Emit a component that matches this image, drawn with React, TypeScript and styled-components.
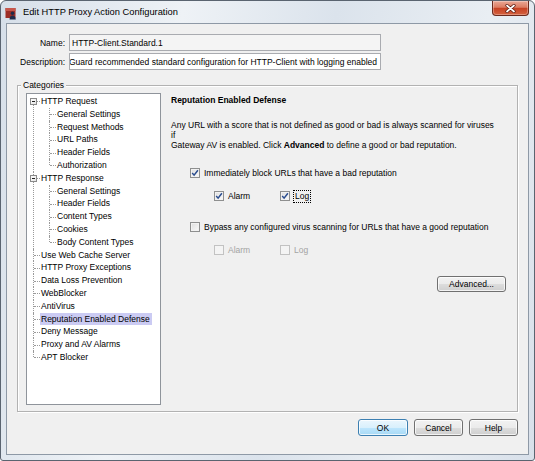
import React from 'react';
import styled, { createGlobalStyle, css } from 'styled-components';

const GlobalStyle = createGlobalStyle`
  html, body {
    margin: 0;
    padding: 0;
    background: #ffffff;
  }
  body {
    font-family: "Liberation Sans", Arial, sans-serif;
    color: #000;
  }
  ul {
    list-style: none;
    margin: 0;
    padding: 0;
  }
`;

const Window = styled.div`
  box-sizing: border-box;
  width: 535px;
  height: 461px;
  display: flex;
  flex-direction: column;
  border: 1px solid #5a6470;
  border-radius: 6px 6px 3px 3px;
  background: linear-gradient(100deg, #d6dfe9 0%, #eef2f6 30%, #dbe3ec 55%, #e9eef3 80%, #d8e0ea 100%);
  overflow: hidden;
`;

const TitleBar = styled.div`
  height: 22px;
  flex-shrink: 0;
  display: flex;
  align-items: flex-start;
  padding: 0 5px 0 4px;
`;

const AppIcon = styled.svg`
  margin-top: 6px;
  flex-shrink: 0;
`;

const TitleText = styled.span`
  margin: 4px 0 0 5px;
  font-size: 9.3px;
  line-height: 14px;
  color: #000;
`;

const CloseButton = styled.div`
  margin-left: auto;
  width: 37px;
  height: 15px;
  box-sizing: border-box;
  border: 1px solid #6b2a1d;
  border-top: none;
  border-radius: 0 0 4px 4px;
  background: linear-gradient(#eaa896 0%, #dc7c62 45%, #c74224 52%, #d4623f 100%);
  box-shadow: inset 0 0 0 1px rgba(255, 255, 255, 0.3);
  display: flex;
  align-items: center;
  justify-content: center;
`;

const Client = styled.div`
  flex: 1;
  margin: 0 5px 5px;
  border: 1px solid #8e99a6;
  background: #f0f0f0;
  display: flex;
  flex-direction: column;
  padding: 10px 10px 18px 10px;
  min-height: 0;
`;

const FieldGrid = styled.div`
  display: grid;
  grid-template-columns: 52px 312px;
  column-gap: 4px;
  row-gap: 2px;
  align-items: center;
  margin-left: -4px;
`;

const FieldLabel = styled.span`
  justify-self: end;
  font-size: 8.5px;
  white-space: nowrap;
`;

const TextBox = styled.div<{ $readOnly?: boolean; $clipStart?: boolean }>`
  box-sizing: border-box;
  height: 17px;
  border: 1px solid #a9abb0;
  background: ${(p) => (p.$readOnly ? '#f4f4f4' : '#ffffff')};
  display: flex;
  align-items: center;
  justify-content: ${(p) => (p.$clipStart ? 'flex-end' : 'flex-start')};
  padding: 0 3px 0 2px;
  overflow: hidden;
  white-space: nowrap;
  font-size: 8.5px;
`;

const GroupBox = styled.div`
  position: relative;
  flex: 1;
  margin-top: 15px;
  border: 1px solid #b2b2b2;
  box-shadow: 1px 1px 0 #ffffff, inset 1px 1px 0 #ffffff;
  display: flex;
  padding: 7px 0 6px 8px;
  min-height: 0;
`;

const Legend = styled.span`
  position: absolute;
  top: -6px;
  left: 3px;
  padding: 0 2px;
  background: #f0f0f0;
  font-size: 8.5px;
  line-height: 11px;
`;

const ROW = 12.8;
const HALF = ROW / 2;

const Tree = styled.div`
  width: 135px;
  flex-shrink: 0;
  box-sizing: border-box;
  border: 1px solid #8f949b;
  background: #ffffff;
  padding-top: 1px;
  font-size: 8.5px;
  line-height: ${ROW}px;
`;

const dotted = '1px dotted #9a9a9a';

const TopItem = styled.li<{ $first?: boolean; $last?: boolean }>`
  position: relative;
  padding-left: 13px;

  &::before {
    content: '';
    position: absolute;
    left: 6px;
    top: ${(p) => (p.$first ? `${HALF}px` : '0')};
    ${(p) =>
      p.$last
        ? css`
            height: ${HALF}px;
          `
        : css`
            bottom: 0;
          `}
    border-left: ${dotted};
  }

  &::after {
    content: '';
    position: absolute;
    left: 7px;
    top: ${HALF}px;
    width: 6px;
    border-top: ${dotted};
  }
`;

const ChildItem = styled.li<{ $last?: boolean }>`
  position: relative;
  padding-left: 16px;

  &::before {
    content: '';
    position: absolute;
    left: 9px;
    top: 0;
    ${(p) =>
      p.$last
        ? css`
            height: ${HALF}px;
          `
        : css`
            bottom: 0;
          `}
    border-left: ${dotted};
  }

  &::after {
    content: '';
    position: absolute;
    left: 10px;
    top: ${HALF}px;
    width: 6px;
    border-top: ${dotted};
  }
`;

const Expander = styled.span`
  position: absolute;
  z-index: 1;
  left: 3px;
  top: 3px;
  width: 7px;
  height: 7px;
  box-sizing: border-box;
  border: 1px solid #8a8a8a;
  background: linear-gradient(135deg, #ffffff, #e4e4e4);

  &::after {
    content: '';
    position: absolute;
    left: 1px;
    right: 1px;
    top: 2px;
    height: 1px;
    background: #202020;
  }
`;

const NodeLabel = styled.span<{ $selected?: boolean }>`
  display: block;
  width: fit-content;
  height: ${ROW}px;
  line-height: ${ROW}px;
  padding: 0 2px 0 1px;
  white-space: nowrap;
  background: ${(p) => (p.$selected ? '#cbcbf3' : 'transparent')};
`;

const RightPanel = styled.div`
  flex: 1;
  display: flex;
  flex-direction: column;
  padding-left: 10px;
  font-size: 8.5px;
`;

const PanelTitle = styled.div`
  margin-top: 1px;
  font-weight: bold;
  line-height: 12px;
`;

const Paragraph = styled.div`
  margin-top: 14px;
  line-height: 10px;
  white-space: nowrap;
  color: #000;
`;

const CheckRow = styled.div<{ $indent: number; $gap: number }>`
  display: flex;
  align-items: center;
  height: 12px;
  margin-left: ${(p) => p.$indent}px;
  margin-top: ${(p) => p.$gap}px;
`;

const CheckItem = styled.label<{ $width?: number; $disabled?: boolean }>`
  display: flex;
  align-items: center;
  gap: 4px;
  width: ${(p) => (p.$width ? `${p.$width}px` : 'auto')};
  color: ${(p) => (p.$disabled ? '#a3a3a3' : '#000')};
  white-space: nowrap;
`;

const CheckBox = styled.span<{ $disabled?: boolean }>`
  width: 10px;
  height: 10px;
  flex-shrink: 0;
  box-sizing: border-box;
  border: 1px solid ${(p) => (p.$disabled ? '#c2c2c2' : '#8e8f8f')};
  background: ${(p) => (p.$disabled ? '#f4f4f4' : 'linear-gradient(135deg, #dedede, #fbfbfb)')};
  box-shadow: inset 0 0 0 1px ${(p) => (p.$disabled ? '#f4f4f4' : '#f2f2f2')};
  display: flex;
  align-items: center;
  justify-content: center;
`;

const FocusText = styled.span`
  outline: 1px dotted #000;
  outline-offset: 0;
  padding: 0 1px;
  line-height: 11px;
`;

const Button = styled.div<{ $width: number; $default?: boolean }>`
  width: ${(p) => p.$width}px;
  height: 17px;
  box-sizing: border-box;
  border: 1px solid ${(p) => (p.$default ? '#3c7fb1' : '#707070')};
  border-radius: 3px;
  background: ${(p) =>
    p.$default
      ? 'linear-gradient(#eaf6fd 0%, #d9f0fc 50%, #bee6fd 50%, #a7d9f5 100%)'
      : 'linear-gradient(#f2f2f2 0%, #ebebeb 50%, #dddddd 50%, #cfcfcf 100%)'};
  box-shadow: inset 0 0 0 1px rgba(255, 255, 255, 0.75);
  display: flex;
  align-items: center;
  justify-content: center;
  font-size: 8.5px;
  color: #000;
`;

const AdvancedButton = styled(Button)`
  align-self: flex-end;
  margin-right: 11px;
  margin-top: 20px;
  height: 16px;
`;

const ButtonBar = styled.div`
  display: flex;
  justify-content: flex-end;
  gap: 6px;
  margin-top: 7px;
`;

const Check: React.FC = () => (
  <svg width="8" height="8" viewBox="0 0 8 8">
    <path d="M1.2 4.1 L3.1 6.2 L6.9 1.3" fill="none" stroke="#2b4d8f" strokeWidth="1.5" />
  </svg>
);

const Box: React.FC<{ checked?: boolean; disabled?: boolean }> = ({ checked, disabled }) => (
  <CheckBox $disabled={disabled}>{checked && <Check />}</CheckBox>
);

type Node = { label: string; children?: string[] };

const tree: Node[] = [
  {
    label: 'HTTP Request',
    children: ['General Settings', 'Request Methods', 'URL Paths', 'Header Fields', 'Authorization'],
  },
  {
    label: 'HTTP Response',
    children: ['General Settings', 'Header Fields', 'Content Types', 'Cookies', 'Body Content Types'],
  },
  { label: 'Use Web Cache Server' },
  { label: 'HTTP Proxy Exceptions' },
  { label: 'Data Loss Prevention' },
  { label: 'WebBlocker' },
  { label: 'AntiVirus' },
  { label: 'Reputation Enabled Defense' },
  { label: 'Deny Message' },
  { label: 'Proxy and AV Alarms' },
  { label: 'APT Blocker' },
];

const selected = 'Reputation Enabled Defense';

export default function App() {
  return (
    <>
      <GlobalStyle />
      <Window>
        <TitleBar>
          <AppIcon width="13" height="13" viewBox="0 0 13 13">
            <rect x="0.5" y="1" width="10" height="10" fill="#9c2d26" />
            <rect x="0.5" y="1" width="10" height="3" fill="#c6564b" />
            <circle cx="7.5" cy="6.2" r="1.8" fill="#1f2b4a" />
            <path d="M4.5 12.5 Q4.8 8.4 7.5 8.4 Q10.4 8.4 10.8 12.5 Z" fill="#1f2b4a" />
          </AppIcon>
          <TitleText>Edit HTTP Proxy Action Configuration</TitleText>
          <CloseButton>
            <svg width="11" height="9" viewBox="0 0 11 9">
              <path d="M2 1.5 L9 7.5 M9 1.5 L2 7.5" stroke="#5a1a10" strokeWidth="3.2" strokeLinecap="round" />
              <path d="M2 1.5 L9 7.5 M9 1.5 L2 7.5" stroke="#ffffff" strokeWidth="1.7" strokeLinecap="round" />
            </svg>
          </CloseButton>
        </TitleBar>

        <Client>
          <FieldGrid>
            <FieldLabel>Name:</FieldLabel>
            <TextBox $readOnly>HTTP-Client.Standard.1</TextBox>
            <FieldLabel>Description:</FieldLabel>
            <TextBox $clipStart>
              WatchGuard recommended standard configuration for HTTP-Client with logging enabled
            </TextBox>
          </FieldGrid>

          <GroupBox>
            <Legend>Categories</Legend>
            <Tree>
              <ul>
                {tree.map((node, i) => (
                  <TopItem key={node.label} $first={i === 0} $last={i === tree.length - 1}>
                    {node.children && <Expander />}
                    <NodeLabel $selected={node.label === selected}>{node.label}</NodeLabel>
                    {node.children && (
                      <ul>
                        {node.children.map((child, j) => (
                          <ChildItem key={child} $last={j === node.children!.length - 1}>
                            <NodeLabel>{child}</NodeLabel>
                          </ChildItem>
                        ))}
                      </ul>
                    )}
                  </TopItem>
                ))}
              </ul>
            </Tree>

            <RightPanel>
              <PanelTitle>Reputation Enabled Defense</PanelTitle>
              <Paragraph>
                Any URL with a score that is not defined as good or bad is always scanned for viruses
                <br />
                <span>if</span>
                <br />
                Gateway AV is enabled. Click <b>Advanced</b> to define a good or bad reputation.
              </Paragraph>

              <CheckRow $indent={19} $gap={17}>
                <CheckItem>
                  <Box checked />
                  Immediately block URLs that have a bad reputation
                </CheckItem>
              </CheckRow>
              <CheckRow $indent={43} $gap={11}>
                <CheckItem $width={66}>
                  <Box checked />
                  Alarm
                </CheckItem>
                <CheckItem>
                  <Box checked />
                  <FocusText>Log</FocusText>
                </CheckItem>
              </CheckRow>

              <CheckRow $indent={19} $gap={19}>
                <CheckItem>
                  <Box />
                  Bypass any configured virus scanning for URLs that have a good reputation
                </CheckItem>
              </CheckRow>
              <CheckRow $indent={43} $gap={11}>
                <CheckItem $width={66} $disabled>
                  <Box disabled />
                  Alarm
                </CheckItem>
                <CheckItem $disabled>
                  <Box disabled />
                  Log
                </CheckItem>
              </CheckRow>

              <AdvancedButton $width={69}>Advanced...</AdvancedButton>
            </RightPanel>
          </GroupBox>

          <ButtonBar>
            <Button $width={50} $default>
              OK
            </Button>
            <Button $width={49}>Cancel</Button>
            <Button $width={49}>Help</Button>
          </ButtonBar>
        </Client>
      </Window>
    </>
  );
}
